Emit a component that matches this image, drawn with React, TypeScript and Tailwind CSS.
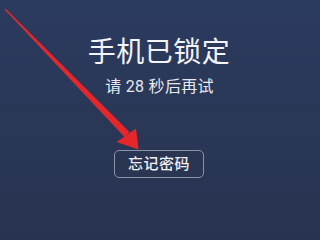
import React from "react";

export default function App() {
  return (
    <div
      className="relative w-[320px] h-[240px] overflow-hidden bg-gradient-to-b from-[#2b3b5e] to-[#283350] flex flex-col items-center"
      style={{ fontFamily: 'Roboto, "Noto Sans CJK SC", "Noto Sans", sans-serif' }}
    >
      <div className="mt-[33px] text-[28px] leading-[40px] text-[#f2f4f8] ml-[-2px] tracking-[0.5px]">手机已锁定</div>
      <div className="mt-[2px] text-[16px] leading-[24px] text-[#e6e9ef] ml-[-1px] tracking-[0.3px]">请 28 秒后再试</div>
      <div className="mt-[51px] ml-[-2px] w-[90px] h-[28px] border border-[#8893a6] rounded-[5px] flex items-center justify-center text-[15px] font-medium text-[#eef0f4] bg-[#2a3552] tracking-[0.5px]">
        忘记密码
      </div>
      <svg className="absolute left-0 top-0" width="320" height="240" viewBox="0 0 320 240">
        <polygon points="4.6,9.4 5.4,8.6 129.5,132 124.5,137" fill="#e5262b" />
        <polygon points="138.5,149.5 116.5,142 136,128.5" fill="#e5262b" />
      </svg>
    </div>
  );
}
